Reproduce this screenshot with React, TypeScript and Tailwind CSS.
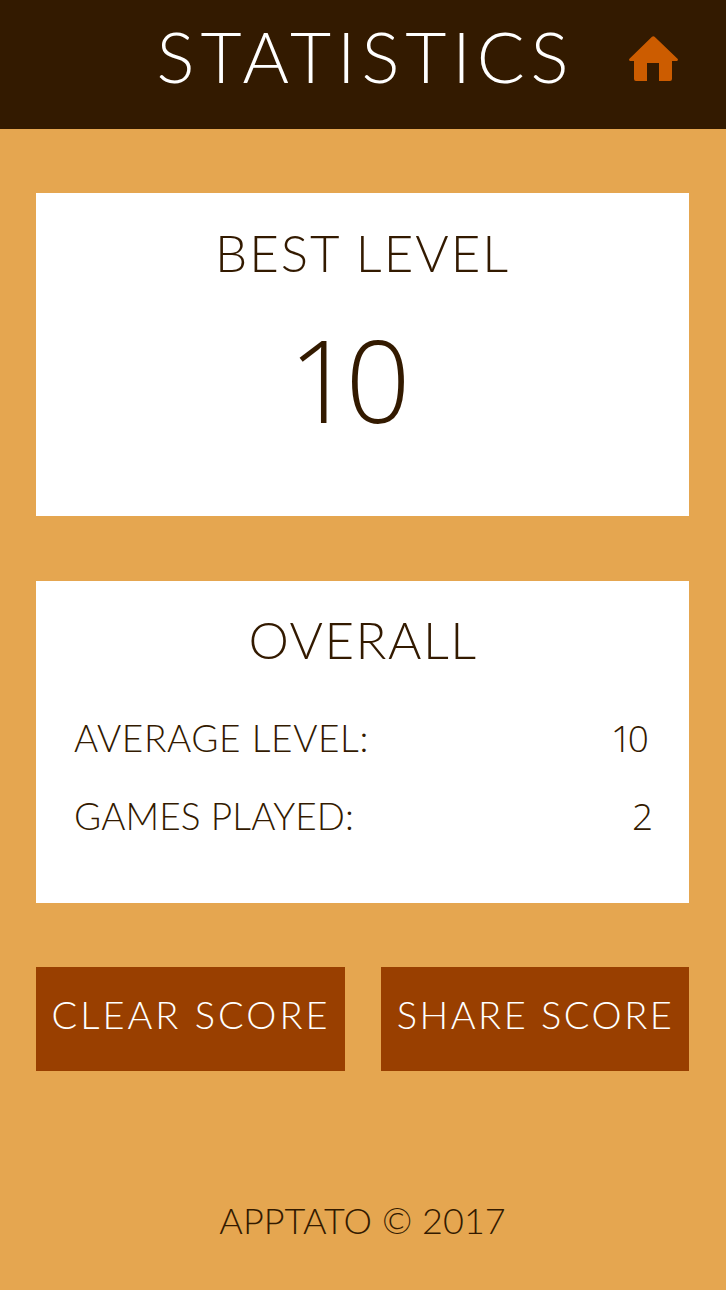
export default function App() {
  const font = { fontFamily: 'Lato, "Open Sans", sans-serif' };
  return (
    <div style={font} className="flex h-[1290px] w-[726px] flex-col bg-[#e5a650] font-light text-[#331a00]">
      <header className="relative flex h-[129px] items-center justify-center bg-[#331a00] pb-[18px] pl-[5px]">
        <h1 className="text-[71px] leading-none font-light tracking-[5.9px] text-white">STATISTICS</h1>
        <svg viewBox="0 0 51 45" className="absolute top-[36px] left-[628px] h-[45px] w-[51px]">
          <path d="M24 0.8 Q25.3 -0.3 26.6 0.8 L49.8 23 Q50.3 25 48.5 25 L44 25 L44 43 Q44 45 42 45 L31 45 L31 27 L19 27 L19 45 L8 45 Q6 45 6 43 L6 25 L2.5 25 Q0.7 25 1.2 23 Z" fill="#cc5c00" />
        </svg>
      </header>
      <main className="flex flex-1 flex-col pt-[64px] pr-[37px] pl-[36px]">
        <section className="flex h-[323px] flex-col items-center bg-white pt-[33px]">
          <h2 className="text-[51px] leading-[54px] font-light tracking-[2px]">BEST LEVEL</h2>
          <div className="mt-[34px] pr-[34px] font-['Open_Sans'] text-[114px] leading-[130px] font-light tracking-[-8px]">10</div>
        </section>
        <section className="mt-[65px] flex h-[322px] flex-col bg-white pt-[32px] pr-[37px] pl-[38px]">
          <h2 className="text-center text-[51px] leading-[54px] font-light tracking-[1.5px]">OVERALL</h2>
          <div className="mt-[47px] flex h-[48px] items-center justify-between text-[37px]">
            <span className="tracking-[0.6px]">AVERAGE LEVEL:</span>
            <span className="mr-[7px] font-['Open_Sans'] tracking-[-4px]">10</span>
          </div>
          <div className="mt-[30px] flex h-[48px] items-center justify-between text-[37px]">
            <span className="tracking-[0.1px]">GAMES PLAYED:</span>
            <span className="-mr-[1px] font-['Open_Sans']">2</span>
          </div>
        </section>
        <div className="mt-[64px] flex justify-between">
          <button className="flex h-[104px] w-[309px] items-center justify-center bg-[#993f00] pb-[10px] pl-[1px] text-[38px] font-light tracking-[3px] text-white">CLEAR SCORE</button>
          <button className="flex h-[104px] w-[308px] items-center justify-center bg-[#993f00] pb-[10px] pl-[1px] text-[38px] font-light tracking-[2.5px] text-white">SHARE SCORE</button>
        </div>
        <footer className="mt-[125px] text-center text-[36px] leading-[48px] tracking-[0.05px]">APPTATO © 2017</footer>
      </main>
    </div>
  );
}
